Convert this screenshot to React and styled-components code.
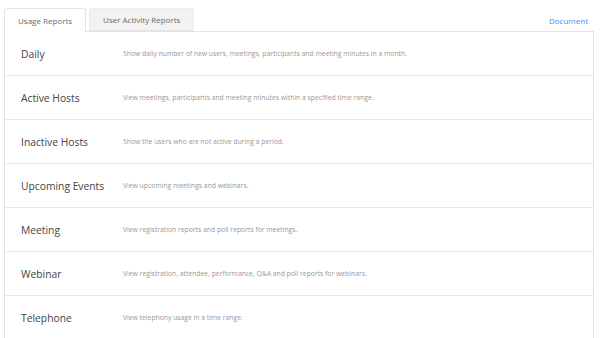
import React, { useState } from 'react';
import styled, { createGlobalStyle } from 'styled-components';

const GlobalStyle = createGlobalStyle`
  html, body { margin: 0; padding: 0; background: #fff; }
  body { font-family: "Open Sans", "Liberation Sans", sans-serif; }
`;

const Page = styled.div`
  width: 600px;
  height: 338px;
  overflow: hidden;
  padding: 8px 6px 0 4px;
  box-sizing: border-box;
`;

const TabBar = styled.div`
  display: flex;
  align-items: flex-end;
  height: 23px;
`;

const Tab = styled.div`
  height: ${p => (p.$active ? '24px' : '23px')};
  margin-bottom: ${p => (p.$active ? '-1px' : '0')};
  padding: 0 13px;
  margin-right: 3px;
  display: flex;
  align-items: center;
  box-sizing: border-box;
  font-size: 8px;
  color: #6a6a6a;
  background: ${p => (p.$active ? '#fff' : '#f2f2f3')};
  border: 1px solid ${p => (p.$active ? '#e4e4e4' : '#ececec')};
  border-bottom: ${p => (p.$active ? 'none' : '1px solid #e4e4e4')};
  border-radius: 3px 3px 0 0;
  position: relative;
  z-index: ${p => (p.$active ? 1 : 0)};
  cursor: pointer;
`;

const Spacer = styled.div`
  flex: 1;
`;

const DocLink = styled.a`
  align-self: center;
  font-size: 8px;
  color: #4a8cf0;
  text-decoration: none;
  margin-right: 6px;
  margin-top: 1px;
`;

const Table = styled.div`
  border: 1px solid #e4e4e4;
  border-bottom: none;
`;

const Row = styled.div`
  display: flex;
  align-items: center;
  height: 44px;
  border-bottom: 1px solid #e8e8e8;
  box-sizing: border-box;
  padding-left: 16px;
`;

const Title = styled.div`
  width: 102px;
  font-size: 10.3px;
  color: #444;
`;

const Desc = styled.div`
  font-size: 6.8px;
  color: #999;
`;

const reports = [
  ['Daily', 'Show daily number of new users, meetings, participants and meeting minutes in a month.'],
  ['Active Hosts', 'View meetings, participants and meeting minutes within a specified time range.'],
  ['Inactive Hosts', 'Show the users who are not active during a period.'],
  ['Upcoming Events', 'View upcoming meetings and webinars.'],
  ['Meeting', 'View registration reports and poll reports for meetings.'],
  ['Webinar', 'View registration, attendee, performance, Q&A and poll reports for webinars.'],
  ['Telephone', 'View telephony usage in a time range.'],
];

export default function App() {
  const [tab, setTab] = useState('usage');
  return (
    <>
      <GlobalStyle />
      <Page>
        <TabBar>
          <Tab $active={tab === 'usage'} onClick={() => setTab('usage')}>Usage Reports</Tab>
          <Tab $active={tab === 'activity'} onClick={() => setTab('activity')}>User Activity Reports</Tab>
          <Spacer />
          <DocLink href="#">Document</DocLink>
        </TabBar>
        <Table>
          {reports.map(([title, desc]) => (
            <Row key={title}>
              <Title>{title}</Title>
              <Desc>{desc}</Desc>
            </Row>
          ))}
        </Table>
      </Page>
    </>
  );
}
